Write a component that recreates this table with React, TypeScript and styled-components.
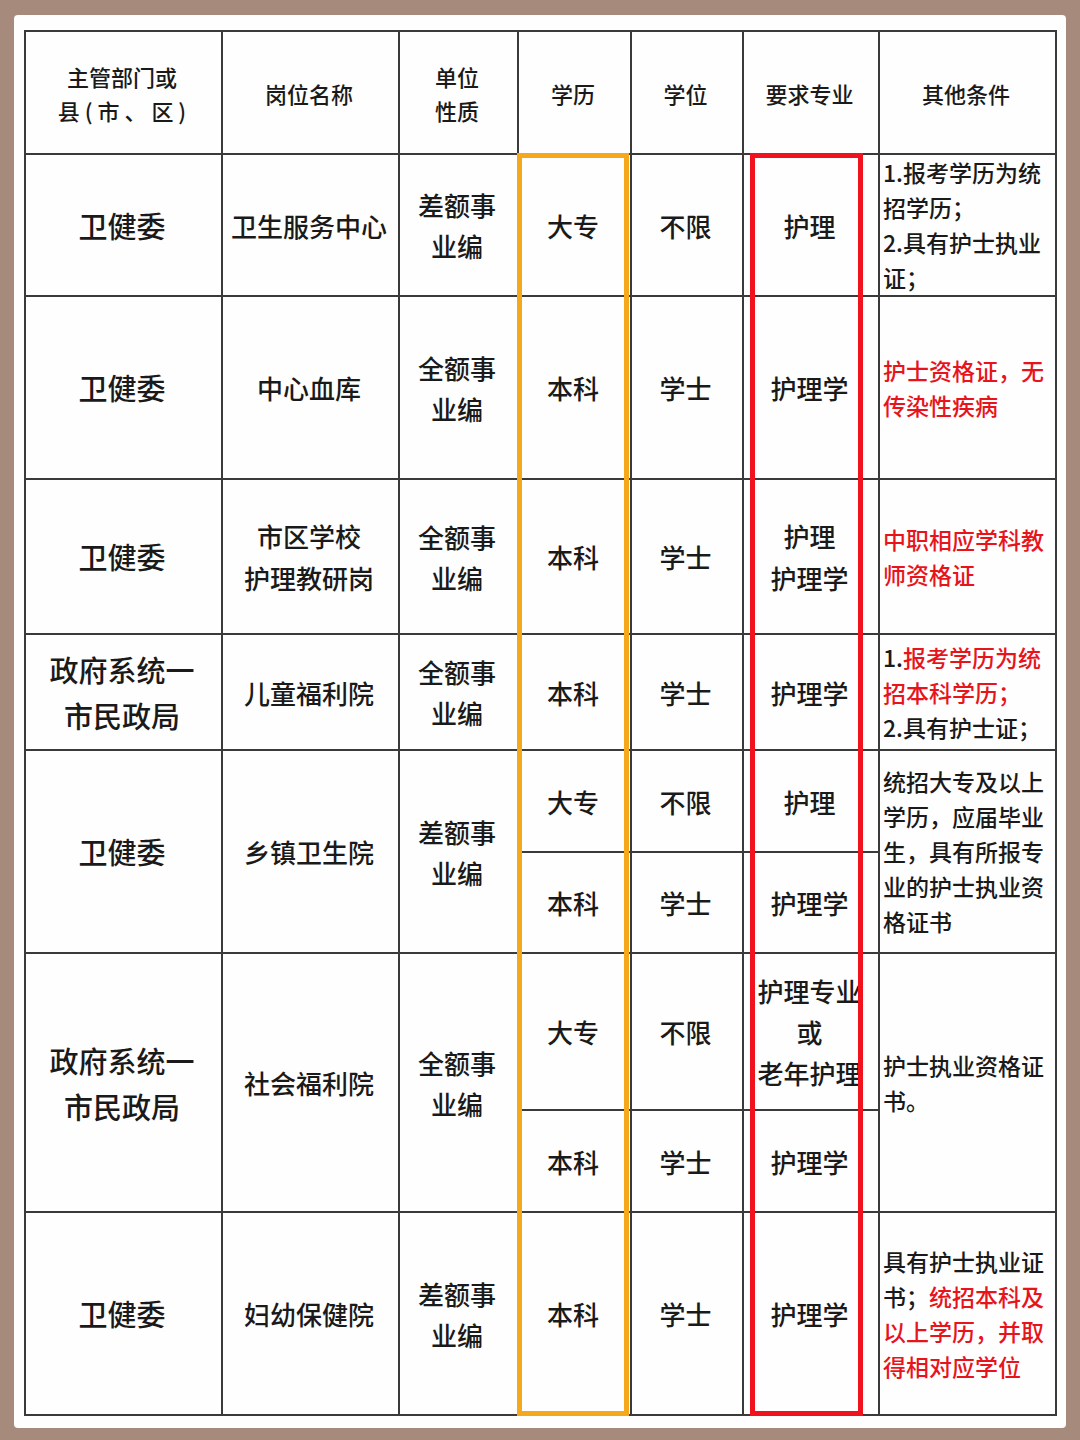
import * as React from 'react';
import styled, { createGlobalStyle } from 'styled-components';

const GlobalStyle = createGlobalStyle`
  html, body {
    margin: 0;
    padding: 0;
    background: #a68b7c;
  }
  body {
    padding: 15px 0 0 14px;
    font-family: "Noto Sans CJK SC", "Noto Sans", sans-serif;
    color: #1a1a1a;
  }
`;

const Card = styled.div`
  display: inline-block;
  background: #fefefe;
  border-radius: 4px;
  padding: 15px 9px 12px 10px;
`;

const TableWrap = styled.div`
  position: relative;
`;

const Grid = styled.div`
  display: grid;
  grid-template-columns: 197px 177px 119px 113px 112px 136px 177px;
  grid-template-rows: 123px 142px 183px 155px 116px 102px 101px 157px 102px 203px;
  border-left: 2px solid #3a3a3a;
  border-top: 2px solid #3a3a3a;
  width: max-content;
`;

type CellProps = {
  $span?: number;
  $size?: number;
  $lh?: number;
  $left?: boolean;
};

const Cell = styled.div<CellProps>`
  box-sizing: border-box;
  grid-row: span ${(p) => p.$span ?? 1};
  border-right: 2px solid #3a3a3a;
  border-bottom: 2px solid #3a3a3a;
  display: flex;
  flex-direction: column;
  justify-content: center;
  align-items: ${(p) => (p.$left ? 'flex-start' : 'center')};
  text-align: ${(p) => (p.$left ? 'left' : 'center')};
  padding: ${(p) => (p.$left ? '0 0 0 3px' : '0 3px 0 0')};
  font-size: ${(p) => p.$size ?? 26}px;
  line-height: ${(p) => p.$lh ?? 41}px;
  font-weight: 500;
  white-space: nowrap;
`;

const HeadCell = styled(Cell).attrs({ $size: 22, $lh: 34 })``;

const Note = styled(Cell).attrs({ $size: 23, $lh: 35, $left: true })``;

const Red = styled.span`
  color: #e8141c;
`;

const Frame = styled.div<{ $x: number; $w: number; $color: string }>`
  position: absolute;
  top: 123px;
  left: ${(p) => p.$x}px;
  width: ${(p) => p.$w}px;
  height: 1263px;
  box-sizing: border-box;
  border: 5px solid ${(p) => p.$color};
  pointer-events: none;
`;

const Lines = ({ items }: { items: React.ReactNode[] }) => (
  <>
    {items.map((t, i) => (
      <div key={i}>{t}</div>
    ))}
  </>
);

export default function App() {
  return (
    <>
      <GlobalStyle />
      <Card>
        <TableWrap>
          <Grid>
            <HeadCell><Lines items={['主管部门或', '县 ( 市 、 区 )']} /></HeadCell>
            <HeadCell>岗位名称</HeadCell>
            <HeadCell><Lines items={['单位', '性质']} /></HeadCell>
            <HeadCell>学历</HeadCell>
            <HeadCell>学位</HeadCell>
            <HeadCell>要求专业</HeadCell>
            <HeadCell>其他条件</HeadCell>

            <Cell $size={29}>卫健委</Cell>
            <Cell>卫生服务中心</Cell>
            <Cell><Lines items={['差额事', '业编']} /></Cell>
            <Cell>大专</Cell>
            <Cell>不限</Cell>
            <Cell>护理</Cell>
            <Note><Lines items={['1.报考学历为统', '招学历；', '2.具有护士执业', '证；']} /></Note>

            <Cell $size={29}>卫健委</Cell>
            <Cell>中心血库</Cell>
            <Cell><Lines items={['全额事', '业编']} /></Cell>
            <Cell>本科</Cell>
            <Cell>学士</Cell>
            <Cell>护理学</Cell>
            <Note><Red><Lines items={['护士资格证，无', '传染性疾病']} /></Red></Note>

            <Cell $size={29}>卫健委</Cell>
            <Cell $lh={42}><Lines items={['市区学校', '护理教研岗']} /></Cell>
            <Cell><Lines items={['全额事', '业编']} /></Cell>
            <Cell>本科</Cell>
            <Cell>学士</Cell>
            <Cell $lh={42}><Lines items={['护理', '护理学']} /></Cell>
            <Note><Red><Lines items={['中职相应学科教', '师资格证']} /></Red></Note>

            <Cell $size={29} $lh={46}><Lines items={['政府系统一', '市民政局']} /></Cell>
            <Cell>儿童福利院</Cell>
            <Cell><Lines items={['全额事', '业编']} /></Cell>
            <Cell>本科</Cell>
            <Cell>学士</Cell>
            <Cell>护理学</Cell>
            <Note>
              <Lines items={[<>1.<Red>报考学历为统</Red></>, <Red>招本科学历；</Red>, '2.具有护士证；']} />
            </Note>

            <Cell $span={2} $size={29}>卫健委</Cell>
            <Cell $span={2}>乡镇卫生院</Cell>
            <Cell $span={2}><Lines items={['差额事', '业编']} /></Cell>
            <Cell>大专</Cell>
            <Cell>不限</Cell>
            <Cell>护理</Cell>
            <Note $span={2}>
              <Lines items={['统招大专及以上', '学历，应届毕业', '生，具有所报专', '业的护士执业资', '格证书']} />
            </Note>
            <Cell>本科</Cell>
            <Cell>学士</Cell>
            <Cell>护理学</Cell>

            <Cell $span={2} $size={29} $lh={46}><Lines items={['政府系统一', '市民政局']} /></Cell>
            <Cell $span={2}>社会福利院</Cell>
            <Cell $span={2}><Lines items={['全额事', '业编']} /></Cell>
            <Cell>大专</Cell>
            <Cell>不限</Cell>
            <Cell><Lines items={['护理专业', '或', '老年护理']} /></Cell>
            <Note $span={2}><Lines items={['护士执业资格证', '书。']} /></Note>
            <Cell>本科</Cell>
            <Cell>学士</Cell>
            <Cell>护理学</Cell>

            <Cell $size={29}>卫健委</Cell>
            <Cell>妇幼保健院</Cell>
            <Cell><Lines items={['差额事', '业编']} /></Cell>
            <Cell>本科</Cell>
            <Cell>学士</Cell>
            <Cell>护理学</Cell>
            <Note>
              <Lines
                items={[
                  '具有护士执业证',
                  <>书；<Red>统招本科及</Red></>,
                  <Red>以上学历，并取</Red>,
                  <Red>得相对应学位</Red>,
                ]}
              />
            </Note>
          </Grid>
          <Frame $x={493} $w={112} $color="#f5a81c" />
          <Frame $x={726} $w={113} $color="#f0121c" />
        </TableWrap>
      </Card>
    </>
  );
}
